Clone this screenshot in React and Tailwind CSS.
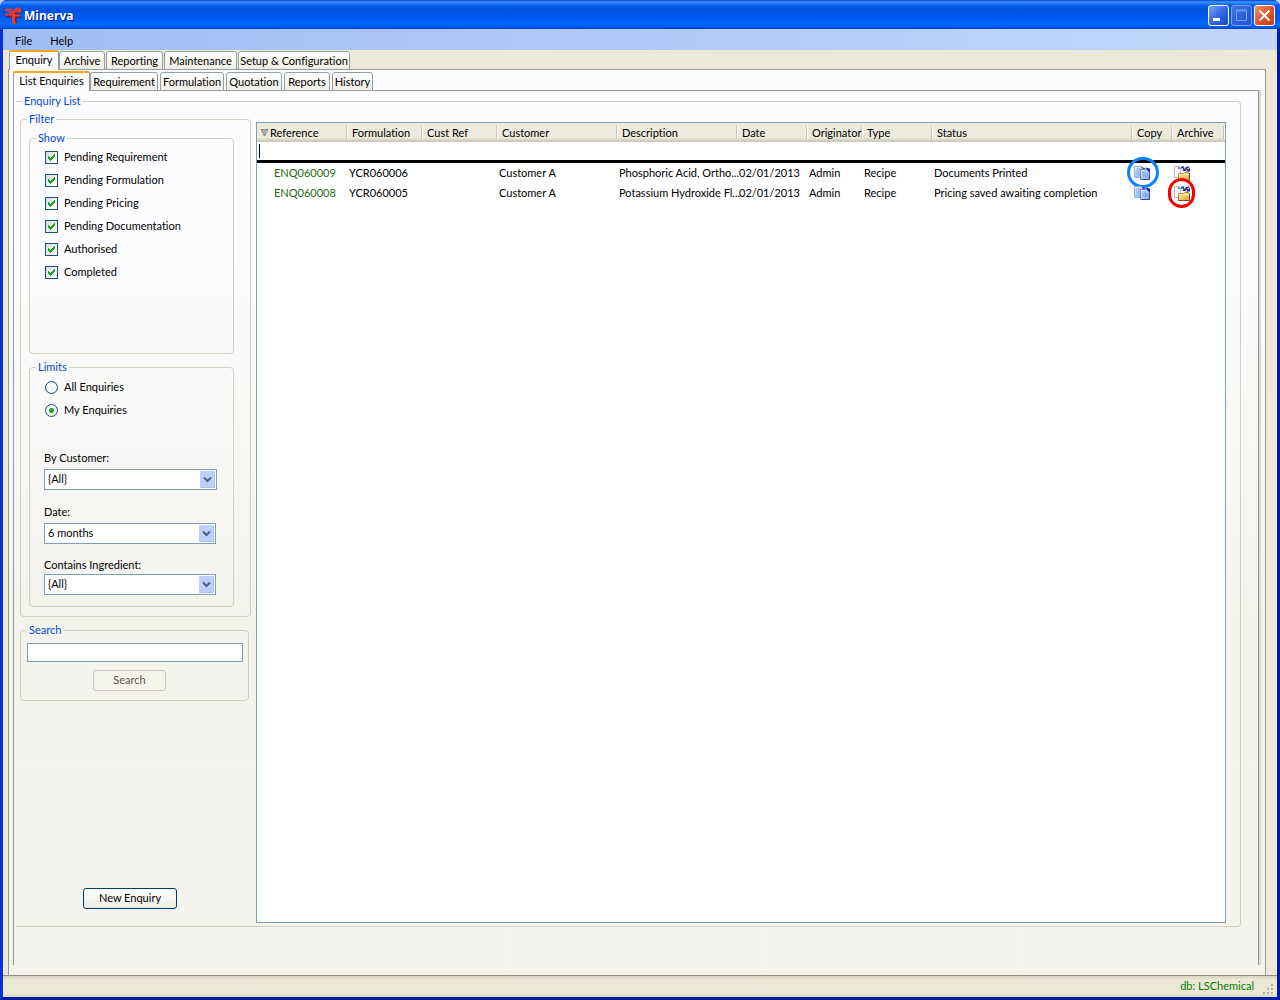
import React from "react";

const show = [
  "Pending Requirement",
  "Pending Formulation",
  "Pending Pricing",
  "Pending Documentation",
  "Authorised",
  "Completed",
];

const columns = [
  ["Reference", "w-[90px]"],
  ["Formulation", "w-[75px]"],
  ["Cust Ref", "w-[75px]"],
  ["Customer", "w-[120px]"],
  ["Description", "w-[120px]"],
  ["Date", "w-[70px]"],
  ["Originator", "w-[55px]"],
  ["Type", "w-[70px]"],
  ["Status", ""],
  ["Copy", "w-[40px]"],
  ["Archive", "w-[53px] pr-px"],
];

const rows = [
  ["ENQ060009", "YCR060006", "", "Customer A", "Phosphoric Acid, Ortho...", "02/01/2013", "Admin", "Recipe", "Documents Printed"],
  ["ENQ060008", "YCR060005", "", "Customer A", "Potassium Hydroxide Fl...", "02/01/2013", "Admin", "Recipe", "Pricing saved awaiting completion"],
];

function Logo() {
  return (
    <svg width="18" height="18" viewBox="0 0 18 18" aria-hidden="true">
      <path fill="none" stroke="#5b2348" strokeWidth="2" d="M11.500 5v12M12 10h5M12 5.500h5M2 9.500h6" />
      <g fill="none" stroke="#ee3a2c" strokeWidth="2">
        <path strokeWidth="3" d="M9.500 4v12" />
        <path d="M8 16h4M1 7.500h8M1 3h3l2 2h3M6 1.500l2 2M10 4l2-2 3-1M11 4.500h6M10 8.500h6M14 2.500h3" />
      </g>
    </svg>
  );
}

function CopyIcon() {
  return (
    <svg width="17" height="15" viewBox="0 0 17 15" aria-hidden="true">
      <defs>
        <linearGradient id="page" x1="0" y1="0" x2="1" y2="1">
          <stop offset="0" stopColor="#f4f9ff" />
          <stop offset="1" stopColor="#7ba6ee" />
        </linearGradient>
      </defs>
      <path d="M.5 .5h7l2 2v9h-9z" fill="url(#page)" stroke="#94a8e0" />
      <path d="M7 1l4 1v3z" fill="#2f3fc0" />
      <path d="M2 3h4M2 5h4M2 7h4M2 9h4" stroke="#8fb2ea" />
      <path d="M6.500 3.500h6l3 3v7h-9z" fill="url(#page)" stroke="#6f85d4" />
      <path d="M11 1.500l5 1V7z" fill="#2230b8" />
      <path d="M8 6h4M8 8h6M8 10h6" stroke="#7396dc" />
      <path d="M15.500 7v6.500h-8" fill="none" stroke="#3947ad" />
    </svg>
  );
}

function ArchiveIcon() {
  return (
    <svg width="17" height="15" viewBox="0 0 17 15" aria-hidden="true">
      <defs>
        <linearGradient id="folder" x1="0" y1="0" x2="1" y2="1">
          <stop offset="0" stopColor="#fff0a8" />
          <stop offset="1" stopColor="#e0a12c" />
        </linearGradient>
      </defs>
      <path d="M.5 .5h4l2 2v9h-6z" fill="#fbfcff" stroke="#b4bac8" />
      <path d="M4 0l3 3H4z" fill="#6f7eb4" />
      <path d="M7 2l2-1 1.500 3.500M15 1l-3 1 2.500 3" fill="none" stroke="#26337f" strokeWidth="1.500" />
      <path d="M8 5h4V2zM12 5.500h4V1.500z" fill="#26337f" />
      <path d="M4.500 7.500h5l1-1h4l1 1v7h-11z" fill="url(#folder)" stroke="#b78734" />
      <path d="M5 8.500h10" stroke="#fff6c9" />
      <path d="M15.500 7v7.500h-11" fill="none" stroke="#6d5232" />
    </svg>
  );
}

function Tabs({ items, label, inner }) {
  return (
    <div role="tablist" aria-label={label} className={"relative z-10 -mb-px flex h-5 items-end " + (inner ? "gap-[2px]" : "gap-px pl-px")}>
      {items.map(([name, width], i) => (
        <button
          key={name}
          role="tab"
          aria-selected={i === 0}
          className={
            (i === 0
              ? "h-5 rounded-t-[2px] border-x border-t-2 border-x-[#919b9c] border-t-[#f5a81c] bg-[#fcfcfe] pb-1 " + (inner ? "-mr-[2px] " : "-mr-px ")
              : "h-[19px] rounded-t-[3px] border border-[#91a0a4] bg-gradient-to-b from-white to-[#eeede5] pt-px ") +
            "text-center leading-4 whitespace-nowrap " + width
          }
        >
          {name}
        </button>
      ))}
    </div>
  );
}

function Group({ title, className, body, children }) {
  return (
    <fieldset className={"min-w-0 rounded-[4px] border border-[#d0d0bf] " + className}>
      <legend className="ml-[6px] px-[2px] leading-3 text-[#0046d5]">{title}</legend>
      <div className={body}>{children}</div>
    </fieldset>
  );
}

function Combo({ id, label, value, className }) {
  return (
    <div className={className}>
      <label htmlFor={id} className="block leading-[14px]">{label}</label>
      <div className="relative">
        <select id={id} className="block h-[21px] w-full appearance-none border border-[#7f9db9] bg-white pl-[3px]">
          <option>{value}</option>
        </select>
        <svg className="pointer-events-none absolute top-[2px] right-[2px]" width="15" height="17" viewBox="0 0 15 17" aria-hidden="true">
          <rect width="15" height="17" rx="1" fill="#bdd0fb" />
          <path d="M.5 16.500h14V.5" fill="none" stroke="#a9c0f0" />
          <path d="M4 6.500l3.500 3.500L11 6.500" fill="none" stroke="#4d6185" strokeWidth="2" />
        </svg>
      </div>
    </div>
  );
}

function WindowButton({ label, close, dim, children }) {
  return (
    <button
      aria-label={label}
      className={
        "h-[21px] w-[21px] rounded-[3px] border " +
        (close
          ? "border-white bg-gradient-to-br from-[#f0906c] via-[#e2542c] to-[#c8391a]"
          : dim
            ? "border-[#7d9fee] bg-gradient-to-br from-[#3d74ea] to-[#1c50d2]"
            : "border-white bg-gradient-to-br from-[#7ba2f6] via-[#3468e4] to-[#1b48c8]")
      }
    >
      <svg width="19" height="19" viewBox="0 0 19 19" aria-hidden="true">{children}</svg>
    </button>
  );
}

export default function App() {
  return (
    <div className="flex min-h-screen flex-col bg-[#c5d3ee] font-[Lato,'Liberation_Sans',sans-serif] text-[11px] text-black [font-variant-ligatures:none]">
      <div className="flex flex-1 flex-col rounded-t-[7px] border-x-[3px] border-b-[3px] border-[#0831d9] border-r-[#0019a8] border-b-[#001ea0] bg-[#0a56e6]">
        <header className="-mx-[3px] flex h-[29px] items-center rounded-t-[7px] bg-[linear-gradient(#0a3fc8_0px,#3d95ff_2px,#0a63ee_5px,#0054e3_9px,#0058ee_17px,#0468ff_24px,#0052e0_28px,#003dbf_29px)] pt-[2px] pr-[5px] pl-1">
          <Logo />
          <h1 className="ml-[2px] flex-1 pt-px font-['Open_Sans',sans-serif] text-[12px] leading-5 font-bold text-white [text-shadow:1px_1px_#0a1883]">Minerva</h1>
          <div className="flex gap-[2px]">
            <WindowButton label="Minimise"><path fill="#fff" d="M4 12h7v3H4z" /></WindowButton>
            <WindowButton label="Maximise" dim><path fill="none" stroke="#7fa0f2" d="M4.500 5v9.500h10V5M4 5h11M4 4h11" /></WindowButton>
            <WindowButton label="Close" close><path fill="none" stroke="#fff" strokeWidth="2" d="M4.500 4.500l10 10M14.500 4.500l-10 10" /></WindowButton>
          </div>
        </header>

        <nav className="flex h-[21px] gap-[18px] bg-gradient-to-r from-[#9ebef5] to-[#c3d7fa] pl-3 leading-6">
          <button>File</button>
          <button>Help</button>
        </nav>

        <main className="flex flex-1 flex-col bg-[#ece9d8] pr-[11px] pl-[5px]">
          <Tabs
            label="Main"
            items={[
              ["Enquiry", "w-[50px]"],
              ["Archive", "w-[46px]"],
              ["Reporting", "w-[57px]"],
              ["Maintenance", "w-[73px]"],
              ["Setup & Configuration", "w-[112px]"],
            ]}
          />
          <div className="flex flex-1 flex-col border-x border-t border-[#919b9c] bg-gradient-to-b from-[#fcfcfe] from-20% to-[#f4f3ee] to-60% pt-px pr-[6px] pb-[10px] pl-1">
            <Tabs
              inner
              label="Enquiry"
              items={[
                ["List Enquiries", "w-[77px]"],
                ["Requirement", "w-[68px]"],
                ["Formulation", "w-[64px]"],
                ["Quotation", "w-[56px]"],
                ["Reports", "w-[46px]"],
                ["History", "w-[41px]"],
              ]}
            />
            <div className="flex flex-1 flex-col border-x border-t border-[#919b9c] pt-1 pr-[17px] pb-[38px] pl-[2px] shadow-[2px_0_#dcd9c8]">
              <fieldset className="min-w-0 rounded-r-[4px] border-y border-r border-[#d0d0bf] pr-[14px] pb-[3px] pl-1">
                <legend className="ml-[2px] px-[2px] leading-3 text-[#0046d5]">Enquiry List</legend>
                <div className="flex min-h-[calc(100vh-184px)] gap-[5px] pt-[6px]">
                  <div className="flex w-[231px] shrink-0 flex-col">
                    <Group title="Filter" body="pt-[7px] pr-4 pb-[9px] pl-2">
                      <Group title="Show" className="h-[222px]" body="px-[15px] pt-[2px]">
                        {show.map((name) => (
                          <label key={name} className="flex h-[23px] items-center gap-[6px]">
                            <span className="grid">
                              <input type="checkbox" defaultChecked className="peer col-start-1 row-start-1 h-[13px] w-[13px] appearance-none border border-[#1c5180] bg-gradient-to-br from-[#dcdcd7] to-white" />
                              <svg className="pointer-events-none invisible col-start-1 row-start-1 peer-checked:visible" width="13" height="13" viewBox="0 0 13 13" shapeRendering="crispEdges" aria-hidden="true">
                                <path fill="#21a121" d="M3 5h1v1h1v1h1V6h1V5h1V4h1V3h1v3H9v1H8v1H7v1H6v1H5V9H4V8H3z" />
                              </svg>
                            </span>
                            {name}
                          </label>
                        ))}
                      </Group>
                      <Group title="Limits" className="mt-[7px]" body="px-[14px] pt-[3px] pb-[11px]">
                        {["All Enquiries", "My Enquiries"].map((name, i) => (
                          <label key={name} className="ml-px flex h-[23px] items-center gap-[6px]">
                            <input type="radio" name="limits" defaultChecked={i === 1} className="h-[13px] w-[13px] appearance-none rounded-full border border-[#1c5180] bg-[#f5f5f2] checked:bg-[radial-gradient(circle,#21a121_0_2px,#f5f5f2_3px)]" />
                            {name}
                          </label>
                        ))}
                        <Combo id="customer" label="By Customer:" value="{All}" className="mt-[29px] w-[173px] [&>label]:mb-1" />
                        <Combo id="date" label="Date:" value="6 months" className="mt-[15px] w-[172px] [&>label]:mb-1" />
                        <Combo id="ingredient" label="Contains Ingredient:" value="{All}" className="mt-[14px] w-[172px] [&>label]:mb-[2px]" />
                      </Group>
                    </Group>
                    <Group title="Search" className="mt-[7px] mr-[2px]" body="pt-[7px] pr-[5px] pb-[9px] pl-[6px]">
                      <input aria-label="Search text" className="block h-[19px] w-full border border-[#7f9db9] bg-white px-1" />
                      <button disabled className="mt-2 ml-[66px] block h-[21px] w-[73px] rounded-[3px] border border-[#c9c7ba] bg-[#f5f4ea] text-[#555]">Search</button>
                    </Group>
                    <button className="mt-auto mb-[14px] ml-[63px] h-[21px] w-[94px] rounded-[3px] border border-[#003c74] bg-gradient-to-b from-white to-[#ecebe5]">New Enquiry</button>
                  </div>

                  <div className="mt-[9px] min-w-0 flex-1 border border-[#7f9db9] bg-white">
                    <table className="w-full table-fixed border-separate border-spacing-0 text-left">
                      <thead>
                        <tr className="h-[19px] bg-[linear-gradient(#ebeadb_0_15px,#d6d2c2_17px,#cbc7b8_19px)]">
                          {columns.map(([name, width], i) => (
                            <th key={name} className={"py-0 pl-0 align-top font-normal " + width}>
                              <div className="mt-[3px] flex h-[13px] items-center border-r border-[#c7c5b2] pt-px shadow-[1px_0_#fff]">
                                {i === 0 && (
                                  <svg className="ml-[3px]" width="9" height="8" viewBox="0 0 9 8" aria-hidden="true"><path d="M1 .5h7L4.500 7z" fill="#b5b3a8" stroke="#8b897f" /></svg>
                                )}
                                <span className={i === 0 ? "ml-px" : "ml-[5px]"}>{name}</span>
                              </div>
                            </th>
                          ))}
                        </tr>
                      </thead>
                      <tbody>
                        <tr>
                          <td colSpan={11} className="border-b-[3px] border-black p-0">
                            <div className="flex h-[18px] items-center pl-[2px]">
                              <span className="h-[14px] w-px bg-black" />
                              <input aria-label="Filter rows" className="h-4 flex-1 outline-none" />
                            </div>
                          </td>
                        </tr>
                        {rows.map((row, r) => (
                          <tr key={row[0]} className="h-5">
                            {row.map((cell, i) => (
                              <td key={i} className={"p-0 whitespace-nowrap " + (i === 0 ? "pl-[17px] text-[#1c6b0a]" : "pl-[2px]")}>{cell}</td>
                            ))}
                            <td className="p-0">
                              <div className="relative ml-[2px] w-[17px]">
                                <button aria-label={"Copy " + row[0]} className="block"><CopyIcon /></button>
                                {r === 0 && <span className="pointer-events-none absolute -top-[9px] -left-[7px] h-[31px] w-[32px] rounded-full border-[3px] border-[#0a84f8]" />}
                              </div>
                            </td>
                            <td className="p-0">
                              <div className="relative ml-[2px] w-[17px]">
                                <button aria-label={"Archive " + row[0]} className="block"><ArchiveIcon /></button>
                                {r === 1 && <span className="pointer-events-none absolute -top-[8px] -left-[6px] h-[30px] w-[27px] rounded-full border-[3px] border-[#f40000]" />}
                              </div>
                            </td>
                          </tr>
                        ))}
                      </tbody>
                    </table>
                  </div>
                </div>
              </fieldset>
            </div>
          </div>
        </main>

        <footer className="flex h-[22px] items-center justify-end border-t border-[#919080] bg-[linear-gradient(#d8d4c0_0px,#ece9d8_4px,#ebe8d6_17px,#dcd8c4_21px)] pr-[3px] text-[#008000]">
          db: LSChemical
          <svg className="mt-1 ml-2" width="12" height="12" viewBox="0 0 12 12" aria-hidden="true">
            <path fill="#b8b4a2" d="M9 1h2v2H9zM5 5h2v2H5zM9 5h2v2H9zM1 9h2v2H1zM5 9h2v2H5zM9 9h2v2H9z" />
          </svg>
        </footer>
      </div>
    </div>
  );
}
